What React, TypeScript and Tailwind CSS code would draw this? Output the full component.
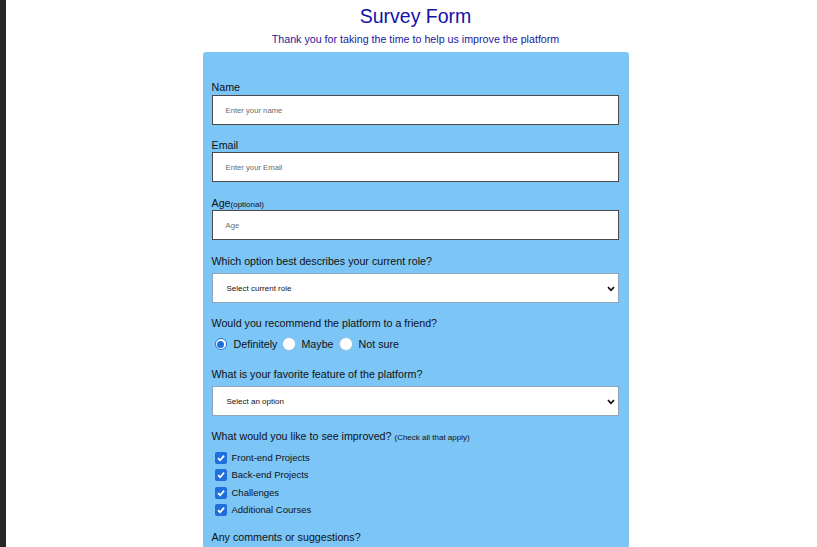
import React from "react";

const font = { fontFamily: '"Liberation Sans", Arial, Helvetica, sans-serif' };

function Chevron() {
  return (
    <svg width="8" height="6" viewBox="0 0 8 6" className="absolute right-[3px] top-[12px]">
      <path d="M1 1.2 L4 4.3 L7 1.2" fill="none" stroke="#111" strokeWidth="1.7" />
    </svg>
  );
}

function Check() {
  return (
    <span className="flex h-[12px] w-[12px] items-center justify-center rounded-[2px] bg-[#1e6fdc]">
      <svg width="10" height="10" viewBox="0 0 9 9">
        <path d="M1.8 4.6 L3.7 6.5 L7.3 2.3" fill="none" stroke="#fff" strokeWidth="1.6" />
      </svg>
    </span>
  );
}

function Radio({ checked }: { checked?: boolean }) {
  return checked ? (
    <span className="flex h-[12px] w-[12px] shrink-0 items-center justify-center rounded-full border border-[#1e6fdc] bg-white">
      <span className="block h-[7px] w-[7px] rounded-full bg-[#1e6fdc]" />
    </span>
  ) : (
    <span className="block h-[12px] w-[12px] shrink-0 rounded-full bg-white shadow-[0_0_0_0.5px_#b8c8d8]" />
  );
}

function TextInput({ placeholder }: { placeholder: string }) {
  return (
    <div className="flex h-[30px] items-center border border-[#4a4a4a] bg-white pl-[13px] pt-[2px] text-[7.7px] text-[#6b6b6b]">
      {placeholder}
    </div>
  );
}

function Select({ text }: { text: string }) {
  return (
    <div className="relative flex h-[30px] items-center border border-[#8fa4b8] bg-white pl-[14px] pt-[2px] text-[8px] text-[#111]">
      {text}
      <Chevron />
    </div>
  );
}

const q = "h-[14px] text-[10.7px] leading-[14px]";

export default function App() {
  return (
    <div className="flex h-[547px] w-[817px] overflow-hidden bg-white" style={font}>
      <div className="h-full w-[6px] bg-[#262626]" />
      <div className="flex flex-1 flex-col items-center pl-[8px]">
        <h1 className="mt-[4px] text-[19.5px] leading-[24px] text-[#1212a8]">Survey Form</h1>
        <p className="mt-[4px] text-[10.7px] leading-[14px] text-[#1a1a9c]">
          Thank you for taking the time to help us improve the platform
        </p>
        <div className="mt-[6px] flex w-[426px] flex-col rounded-t-[3px] bg-[#7cc5f7] px-[9px] pr-[10px] pt-[28px] text-[#111]">
          <label className={q}>Name</label>
          <div className="mt-[1px]"><TextInput placeholder="Enter your name" /></div>

          <label className={"mt-[13px] " + q}>Email</label>
          <div className="mt-[0px]"><TextInput placeholder="Enter your Email" /></div>

          <label className={"mt-[14px] " + q}>
            Age<span className="text-[8px]">(optional)</span>
          </label>
          <div className="mt-[0px]"><TextInput placeholder="Age" /></div>

          <p className={"mt-[14px] " + q}>Which option best describes your current role?</p>
          <div className="mt-[5px]"><Select text="Select current role" /></div>

          <p className={"mt-[13px] " + q}>Would you recommend the platform to a friend?</p>
          <div className="mt-[6px] flex h-[16px] items-center pl-[3px] text-[10.7px]">
            <Radio checked />
            <span className="ml-[7px]">Definitely</span>
            <span className="ml-[6px]"><Radio /></span>
            <span className="ml-[6px]">Maybe</span>
            <span className="ml-[6px]"><Radio /></span>
            <span className="ml-[7px]">Not sure</span>
          </div>

          <p className={"mt-[15px] " + q}>What is your favorite feature of the platform?</p>
          <div className="mt-[5px]"><Select text="Select an option" /></div>

          <p className={"mt-[13px] " + q}>
            What would you like to see improved? <span className="text-[8px]">(Check all that apply)</span>
          </p>
          <div className="mt-[6px] flex flex-col pl-[3px] text-[9.5px]">
            {["Front-end Projects", "Back-end Projects", "Challenges", "Additional Courses"].map((t) => (
              <div key={t} className="flex h-[17.5px] items-center">
                <Check />
                <span className="ml-[5px]">{t}</span>
              </div>
            ))}
          </div>

          <p className={"mt-[11px] " + q}>Any comments or suggestions?</p>
          <div className="h-[40px]" />
        </div>
      </div>
    </div>
  );
}
